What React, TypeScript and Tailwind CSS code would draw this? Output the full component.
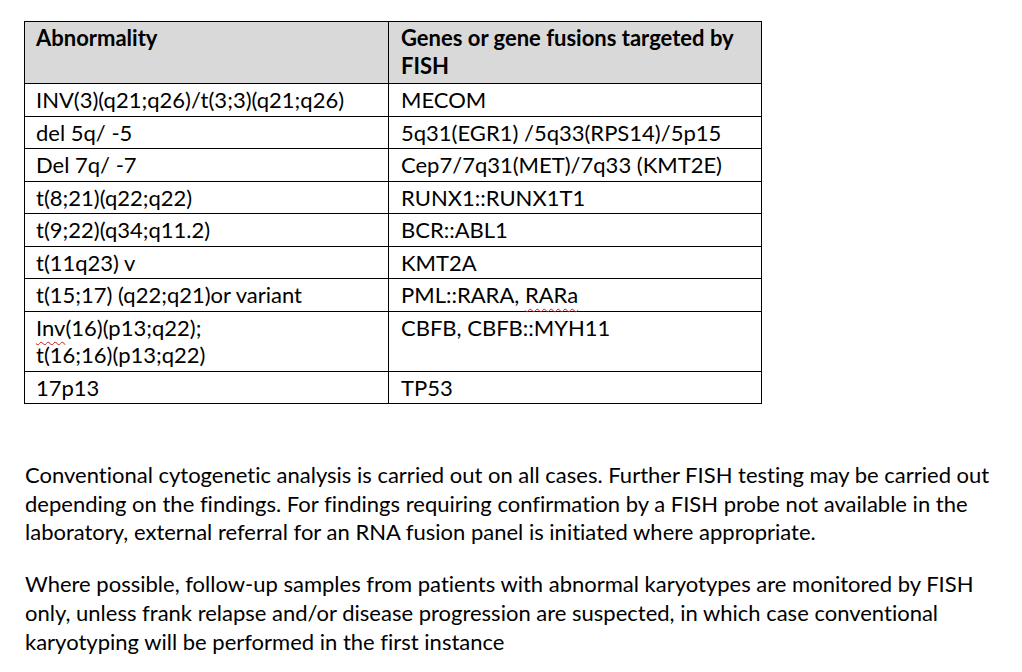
const rows: { abn: React.ReactNode; genes: React.ReactNode }[] = [
  { abn: "INV(3)(q21;q26)/t(3;3)(q21;q26)", genes: "MECOM" },
  { abn: "del 5q/ -5", genes: "5q31(EGR1) /5q33(RPS14)/5p15" },
  { abn: "Del 7q/ -7", genes: "Cep7/7q31(MET)/7q33 (KMT2E)" },
  { abn: "t(8;21)(q22;q22)", genes: "RUNX1::RUNX1T1" },
  { abn: "t(9;22)(q34;q11.2)", genes: "BCR::ABL1" },
  { abn: "t(11q23) v", genes: "KMT2A" },
  {
    abn: "t(15;17) (q22;q21)or variant",
    genes: (
      <>
        PML::RARA, <Squiggle>RARa</Squiggle>
      </>
    ),
  },
  {
    abn: (
      <>
        <Squiggle>Inv</Squiggle>(16)(p13;q22);
        <br />
        t(16;16)(p13;q22)
      </>
    ),
    genes: "CBFB, CBFB::MYH11",
  },
  { abn: "17p13", genes: "TP53" },
];

// red spell-check squiggle, like the word processor draws it
function Squiggle({ children }: { children: React.ReactNode }) {
  return (
    <span className="underline decoration-wavy decoration-[#d01818] decoration-1 underline-offset-[5px]">
      {children}
    </span>
  );
}

export default function App() {
  return (
    <div className="min-h-screen bg-white pl-[24px] pt-[21px] font-['Lato',sans-serif] text-[22px] text-black [font-variant-ligatures:none]">
      <table className="w-[738px] table-fixed border-collapse border border-black">
        <colgroup>
          <col className="w-[364px]" />
          <col />
        </colgroup>
        <thead>
          <tr className="bg-[#d9d9d9] align-top">
            <th className="border border-black px-[11px] pt-[2px] pb-[3px] text-left leading-[28px] font-bold">
              Abnormality
            </th>
            <th className="border border-black px-[12px] pt-[2px] pb-[3px] text-left leading-[28px] font-bold">
              Genes or gene fusions targeted by
              <br />
              FISH
            </th>
          </tr>
        </thead>
        <tbody>
          {rows.map((row, i) => (
            <tr key={i} className="align-top">
              <td className="border border-black px-[11px] pt-[2px] pb-[2px] leading-[27.5px] whitespace-nowrap">
                {row.abn}
              </td>
              <td className="border border-black px-[12px] pt-[2px] pb-[2px] leading-[27.5px] whitespace-nowrap">
                {row.genes}
              </td>
            </tr>
          ))}
        </tbody>
      </table>

      <p className="mt-[57px] pl-px leading-[28.5px] whitespace-nowrap">
        Conventional cytogenetic analysis is carried out on all cases. Further FISH testing may be carried out
        <br />
        depending on the findings. For findings requiring confirmation by a FISH probe not available in the
        <br />
        laboratory, external referral for an RNA fusion panel is initiated where appropriate.
      </p>

      <p className="mt-[22px] pl-px leading-[29px] whitespace-nowrap">
        Where possible, follow-up samples from patients with abnormal karyotypes are monitored by FISH
        <br />
        only, unless frank relapse and/or disease progression are suspected, in which case conventional
        <br />
        karyotyping will be performed in the first instance
      </p>
    </div>
  );
}
